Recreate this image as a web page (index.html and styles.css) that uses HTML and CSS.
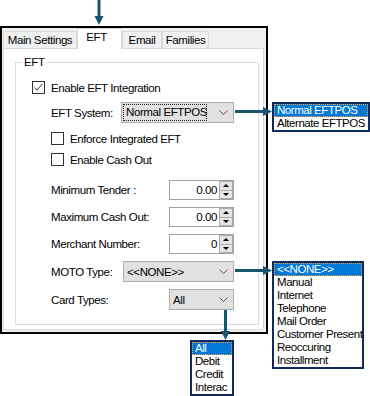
FILE: index.html
```html
<!DOCTYPE html>
<html lang="en">
<head>
	<meta charset="UTF-8">
	<title>EFT Settings</title>
	<link rel="stylesheet" href="styles.css">
</head>
<body>
	<div class="window">
		<div class="tabs">
			<div class="tab tab-main">Main Settings</div>
			<div class="tab tab-eft active">EFT</div>
			<div class="tab tab-email">Email</div>
			<div class="tab tab-fam">Families</div>
		</div>
		<div class="panel">
			<div class="group">
				<div class="legend">EFT</div>
				<div class="row r1">
					<span class="check"><svg width="11" height="11" viewBox="0 0 11 11"><polyline points="1.5,5.5 4,8 9.5,2" fill="none" stroke="#333" stroke-width="1"/></svg></span>
					<span>Enable EFT Integration</span>
				</div>
				<div class="row r2 field">
					<span>EFT System:</span>
					<div class="select sel-eft">
						<span class="focus">Normal EFTPOS</span>
						<svg class="chev" width="9" height="5" viewBox="0 0 9 5"><polyline points="0.5,0.5 4.5,4.5 8.5,0.5" fill="none" stroke="#555" stroke-width="1"/></svg>
					</div>
				</div>
				<div class="row r3 sub">
					<span class="check"></span>
					<span>Enforce Integrated EFT</span>
				</div>
				<div class="row r4 sub">
					<span class="check"></span>
					<span>Enable Cash Out</span>
				</div>
				<div class="row r5 field num-row">
					<span>Minimum Tender :</span>
					<div class="num">
						<span class="val">0.00</span>
						<span class="spin"><i class="up"></i><i class="down"></i></span>
					</div>
				</div>
				<div class="row r6 field num-row">
					<span>Maximum Cash Out:</span>
					<div class="num">
						<span class="val">0.00</span>
						<span class="spin"><i class="up"></i><i class="down"></i></span>
					</div>
				</div>
				<div class="row r7 field num-row">
					<span>Merchant Number:</span>
					<div class="num">
						<span class="val">0</span>
						<span class="spin"><i class="up"></i><i class="down"></i></span>
					</div>
				</div>
				<div class="row r8 field">
					<span>MOTO Type:</span>
					<div class="select sel-moto">
						<span>&lt;&lt;NONE&gt;&gt;</span>
						<svg class="chev" width="9" height="5" viewBox="0 0 9 5"><polyline points="0.5,0.5 4.5,4.5 8.5,0.5" fill="none" stroke="#555" stroke-width="1"/></svg>
					</div>
				</div>
				<div class="row r9 field">
					<span>Card Types:</span>
					<div class="select sel-card">
						<span>All</span>
						<svg class="chev" width="9" height="5" viewBox="0 0 9 5"><polyline points="0.5,0.5 4.5,4.5 8.5,0.5" fill="none" stroke="#555" stroke-width="1"/></svg>
					</div>
				</div>
			</div>
		</div>
	</div>

	<!-- callout arrows -->
	<svg class="arrows" width="370" height="396" viewBox="0 0 370 396">
		<g fill="#195470" stroke="#195470">
			<line x1="99" y1="0" x2="99" y2="17" stroke-width="3"/>
			<polygon points="94.5,16 103.5,16 99,25" stroke="none"/>
			<line x1="235" y1="111.5" x2="264" y2="111.5" stroke-width="3"/>
			<polygon points="263,107 263,116 272,111.5" stroke="none"/>
			<line x1="235" y1="270.5" x2="264" y2="270.5" stroke-width="3"/>
			<polygon points="263,266 263,275 272,270.5" stroke="none"/>
			<line x1="225.5" y1="310" x2="225.5" y2="332" stroke-width="3"/>
			<polygon points="221,331 230,331 225.5,340" stroke="none"/>
		</g>
	</svg>

	<ul class="list list-eft">
		<li class="sel">Normal EFTPOS</li>
		<li>Alternate EFTPOS</li>
	</ul>
	<ul class="list list-moto">
		<li class="sel">&lt;&lt;NONE&gt;&gt;</li>
		<li>Manual</li>
		<li>Internet</li>
		<li>Telephone</li>
		<li>Mail Order</li>
		<li>Customer Present</li>
		<li>Reoccuring</li>
		<li>Installment</li>
	</ul>
	<ul class="list list-card">
		<li class="sel">All</li>
		<li>Debit</li>
		<li>Credit</li>
		<li>Interac</li>
	</ul>
</body>
</html>
```

FILE: styles.css
```css
body {
	margin: 0;
	width: 370px;
	height: 396px;
	position: relative;
	background: #fff;
	color: #000;
	font: 11.5px/16px "Liberation Sans", Arial, sans-serif;
	letter-spacing: -0.4px;
	white-space: nowrap;
	overflow: hidden;
}
ul {
	margin: 0;
	padding: 0;
	list-style: none;
}
.window {
	margin-top: 26px;
	width: 268px;
	height: 308px;
	box-sizing: border-box;
	border: 2px solid #000;
	background: #f0f0f0;
	display: flex;
	flex-direction: column;
}
/* tabs */
.tabs {
	display: flex;
	align-items: flex-end;
	height: 20px;
	padding-left: 1px;
}
.tab {
	box-sizing: border-box;
	height: 17px;
	border: 1px solid #d9d9d9;
	border-bottom: none;
	background: #f0f0f0;
	text-align: center;
	line-height: 16px;
}
.tab-main {
	width: 74px;
}
.tab-eft {
	width: 45px;
	padding-right: 6px;
}
.tab-email {
	width: 40px;
}
.tab-fam {
	width: 47px;
}
.tab.active {
	height: 21px;
	margin-bottom: -1px;
	background: #fff;
	position: relative;
	z-index: 1;
}
.panel {
	flex: 1;
	margin: 0 2px 2px 1px;
	border: 1px solid #d9d9d9;
	background: #fff;
	display: flex;
	flex-direction: column;
}
.group {
	flex: 1;
	margin: 13px 4px 4px 11px;
	border: 1px solid #dcdcdc;
}
.legend {
	width: max-content;
	margin: -7px 0 0 6px;
	padding: 0 2px;
	background: #fff;
	line-height: 13px;
}
/* rows */
.row {
	display: flex;
	align-items: center;
	height: 21px;
	padding: 0 24px 0 16px;
}
.row.field {
	padding-left: 35px;
}
.row.sub {
	padding-left: 35px;
}
.num-row {
	height: 20px;
}
.r1 { margin-top: 8px; }
.r2 { margin-top: 4px; }
.r3 { margin-top: 5px; }
.r4 { margin-top: 0; }
.r5 { margin-top: 10px; }
.r6 { margin-top: 7px; }
.r7 { margin-top: 7px; }
.r8 { margin-top: 7px; }
.r9 { margin-top: 7px; }

.check {
	box-sizing: border-box;
	width: 13px;
	height: 13px;
	border: 1px solid #333;
	background: #fff;
	margin-right: 6px;
	flex: none;
}
.check svg {
	display: block;
}
.select {
	margin-left: auto;
	box-sizing: border-box;
	height: 21px;
	display: flex;
	align-items: center;
	border: 1px solid #adadad;
	background: #e1e1e1;
	padding: 0 5px 0 3px;
}
.chev {
	margin-left: auto;
	display: block;
}
.sel-eft {
	width: 113px;
	padding-left: 1px;
}
.sel-eft .focus {
	box-sizing: border-box;
	width: 84px;
	height: 17px;
	border: 1px dotted #222;
	padding-left: 2px;
	line-height: 15px;
}
.sel-moto {
	width: 111px;
}
.sel-card {
	width: 65px;
}
/* numeric up/down */
.num {
	margin-left: auto;
	box-sizing: border-box;
	width: 65px;
	height: 20px;
	border: 1px solid #a0a0a0;
	background: #fff;
	display: flex;
	align-items: stretch;
}
.val {
	flex: 1;
	text-align: right;
	padding-right: 2px;
	line-height: 18px;
}
.spin {
	width: 14px;
	display: flex;
	flex-direction: column;
}
.spin i {
	flex: 1;
	box-sizing: border-box;
	border: 1px solid #adadad;
	background: #e5e5e5;
	display: flex;
	align-items: center;
	justify-content: center;
}
.spin i + i {
	border-top: none;
}
.spin i::before {
	content: "";
	border-left: 3px solid transparent;
	border-right: 3px solid transparent;
}
.spin .up::before {
	border-bottom: 3px solid #000;
}
.spin .down::before {
	border-top: 3px solid #000;
}
/* callouts */
.arrows {
	position: absolute;
	left: 0;
	top: 0;
	pointer-events: none;
}
.list {
	position: absolute;
	box-sizing: border-box;
	border: 2px solid #0e2b5c;
	background: #fff;
	font-size: 11.5px;
	letter-spacing: -0.45px;
	line-height: 13px;
}
.list li {
	height: 13px;
	padding-left: 3px;
}
.list li.sel {
	box-sizing: border-box;
	background: #0078d7;
	color: #fff;
	border: 1px dotted #f5a43a;
	padding-left: 2px;
	line-height: 11px;
}
.list-eft {
	left: 272px;
	top: 102px;
	width: 98px;
}
.list-moto {
	left: 272px;
	top: 261px;
	width: 92px;
}
.list-card {
	left: 190px;
	top: 340px;
	width: 44px;
}
```
